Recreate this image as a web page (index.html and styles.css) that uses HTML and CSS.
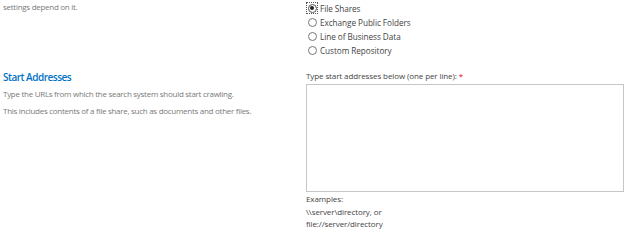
FILE: index.html
```html
<!DOCTYPE html>
<html>
<head>
<meta charset="utf-8">
<link rel="stylesheet" href="styles.css">
</head>
<body>
<div class="section first">
  <div class="desc">
    <p class="text">settings depend on it.</p>
  </div>
  <div class="control">
    <div class="radios">
      <label class="radio"><span class="focus"><span class="dot checked"></span></span>File Shares</label>
      <label class="radio"><span class="nofocus"><span class="dot"></span></span>Exchange Public Folders</label>
      <label class="radio"><span class="nofocus"><span class="dot"></span></span>Line of Business Data</label>
      <label class="radio"><span class="nofocus"><span class="dot"></span></span>Custom Repository</label>
    </div>
  </div>
</div>
<div class="section second">
  <div class="desc">
    <h3 class="title">Start Addresses</h3>
    <p class="text">Type the URLs from which the search system should start crawling.</p>
    <p class="text">This includes contents of a file share, such as documents and other files.</p>
  </div>
  <div class="control">
    <div class="label">Type start addresses below (one per line): <span class="req">*</span></div>
    <div class="textarea"></div>
    <div class="examples">Examples:<br>\\server\directory, or<br>file://server/directory</div>
  </div>
</div>
</body>
</html>
```
FILE: styles.css
```css
html, body {
  margin: 0;
  padding: 0;
  background: #fff;
}
body {
  font-family: "Open Sans", "Noto Sans", sans-serif;
  font-size: 8px;
  color: #444;
}
.section {
  display: flex;
}
.desc {
  width: 303px;
  padding-left: 3px;
  flex: none;
}
.control {
  flex: 1;
  padding-right: 6px;
}
.text {
  margin: 0 0 6px 0;
  color: #7a7a7a;
  font-size: 8px;
  letter-spacing: -0.28px;
  line-height: 11px;
}
.first .text {
  margin-top: 1px;
}
.first {
  height: 68px;
}
.radios {
  display: flex;
  flex-direction: column;
  padding-top: 1px;
}
.radio {
  display: flex;
  align-items: center;
  height: 14px;
  color: #444;
  font-size: 8.2px;
  letter-spacing: -0.05px;
}
.focus, .nofocus {
  width: 12px;
  height: 12px;
  box-sizing: border-box;
  display: flex;
  align-items: center;
  justify-content: center;
  margin-right: 2px;
}
.focus {
  border: 1px dotted #555;
}
.dot {
  width: 9px;
  height: 9px;
  box-sizing: border-box;
  border: 1px solid #777;
  border-radius: 50%;
  position: relative;
}
.dot.checked {
  border-color: #555;
}
.dot.checked::after {
  content: "";
  position: absolute;
  left: 1.5px;
  top: 1.5px;
  width: 4px;
  height: 4px;
  border-radius: 50%;
  background: #222;
}
.title {
  margin: 3px 0 4px 0;
  font-size: 10px;
  letter-spacing: -0.5px;
  font-weight: 600;
  color: #0072c6;
  line-height: 13px;
}
.label {
  margin-top: 2px;
  line-height: 12px;
  font-size: 8px;
  letter-spacing: -0.1px;
  color: #444;
}
.req {
  color: #e00;
}
.textarea {
  margin-top: 2px;
  height: 108px;
  border: 1px solid #c6c6c6;
  box-sizing: border-box;
  width: 318px;
}
.examples {
  margin-top: 1px;
  line-height: 12.5px;
  font-size: 8px;
  letter-spacing: -0.1px;
  color: #444;
}
```
